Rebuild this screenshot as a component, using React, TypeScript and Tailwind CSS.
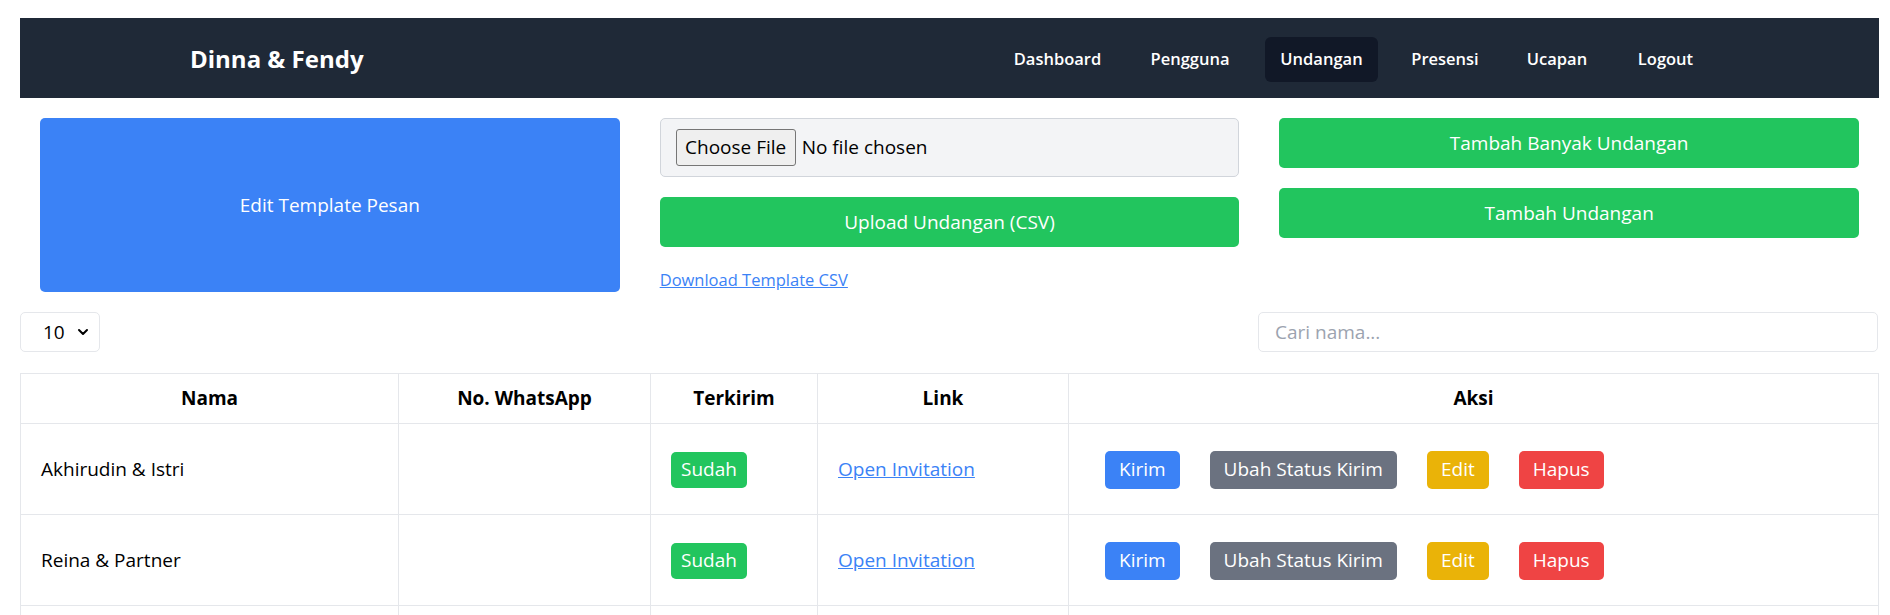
import { ChevronDown } from 'lucide-react'

const navItems = [
  { label: 'Dashboard', w: 'w-[115px]' },
  { label: 'Pengguna', w: 'w-[110px]' },
  { label: 'Undangan', w: 'w-[113px]', active: true },
  { label: 'Presensi', w: 'w-[94px]' },
  { label: 'Ucapan', w: 'w-[90px]' },
  { label: 'Logout', w: 'w-[87px]' },
]

const rows = [
  { nama: 'Akhirudin & Istri', wa: '', terkirim: true },
  { nama: 'Reina & Partner', wa: '', terkirim: true },
  { nama: 'Keluarga Besar', wa: '', terkirim: true },
]

function App() {
  return (
    <div className="min-h-screen bg-white pt-[18px] pl-[20px] pr-[11px] text-black font-['Open_Sans','Noto_Sans',sans-serif]">
      {/* navbar */}
      <nav className="h-[80px] bg-[#1f2937] flex items-center justify-between px-[170px] pt-[2px]">
        <span className="text-white text-[24px] font-bold">Dinna &amp; Fendy</span>
        <div className="flex items-center gap-[20px]">
          {navItems.map((item) => (
            <a
              key={item.label}
              className={`${item.w} h-[45px] flex items-center justify-center rounded-[6px] text-white text-[16.5px] font-semibold ${item.active ? 'bg-[#111827]' : ''}`}
            >
              {item.label}
            </a>
          ))}
        </div>
      </nav>

      {/* actions */}
      <div className="grid grid-cols-3 gap-x-[40px] px-[20px] pt-[20px]">
        <button className="bg-[#3b82f6] text-white text-[19px] rounded-[5px] flex items-center justify-center">
          Edit Template Pesan
        </button>
        <div className="flex flex-col gap-[20px]">
          <div className="h-[59px] flex items-center pl-[15px] bg-[#f3f4f6] border border-[#d1d5db] rounded-[5px]">
            <span className="h-[37px] w-[120px] flex items-center justify-center border border-[#767676] bg-[#efefef] rounded-[3px] text-[19px]">
              Choose File
            </span>
            <span className="ml-[6px] text-[19px]">No file chosen</span>
          </div>
          <button className="h-[50px] bg-[#22c55e] text-white text-[19px] rounded-[5px]">
            Upload Undangan (CSV)
          </button>
          <a className="text-[16.5px] leading-[25px] text-[#3b82f6] underline w-fit">Download Template CSV</a>
        </div>
        <div className="flex flex-col gap-[20px]">
          <button className="h-[50px] bg-[#22c55e] text-white text-[19px] rounded-[5px]">
            Tambah Banyak Undangan
          </button>
          <button className="h-[50px] bg-[#22c55e] text-white text-[19px] rounded-[5px]">
            Tambah Undangan
          </button>
        </div>
      </div>

      {/* filters */}
      <div className="flex items-center justify-between mt-[20px] pr-px">
        <div className="w-[80px] h-[40px] flex items-center justify-between pl-[22px] pr-[8px] border border-[#e5e7eb] rounded-[5px] text-[19px]">
          <span>10</span>
          <ChevronDown size={16} strokeWidth={3} />
        </div>
        <input
          className="w-[620px] h-[40px] px-[16px] border border-[#e5e7eb] rounded-[5px] text-[19px] placeholder:text-[#9ca3af] outline-none"
          placeholder="Cari nama..."
        />
      </div>

      {/* table */}
      <table className="w-full mt-[21px] border-collapse border border-[#e5e7eb] text-[19px]">
        <colgroup>
          <col className="w-[378px]" />
          <col className="w-[252px]" />
          <col className="w-[167px]" />
          <col className="w-[251px]" />
          <col />
        </colgroup>
        <thead>
          <tr className="h-[50px]">
            {['Nama', 'No. WhatsApp', 'Terkirim', 'Link', 'Aksi'].map((h) => (
              <th key={h} className="border border-[#e5e7eb] font-bold text-center">{h}</th>
            ))}
          </tr>
        </thead>
        <tbody>
          {rows.map((r) => (
            <tr key={r.nama} className="h-[91px]">
              <td className="border border-[#e5e7eb] px-[20px] pt-px">{r.nama}</td>
              <td className="border border-[#e5e7eb] px-[20px]">{r.wa}</td>
              <td className="border border-[#e5e7eb] px-[20px] pt-px">
                <span className={`inline-flex items-center h-[36px] px-[10px] rounded-[5px] text-white ${r.terkirim ? 'bg-[#22c55e]' : 'bg-[#ef4444]'}`}>
                  {r.terkirim ? 'Sudah' : 'Belum'}
                </span>
              </td>
              <td className="border border-[#e5e7eb] px-[20px] pt-px">
                <a className="text-[#3b82f6] underline">Open Invitation</a>
              </td>
              <td className="border border-[#e5e7eb] px-[21px] pt-px">
                <div className="flex items-center">
                  <button className="h-[38px] px-[14px] mx-[15px] rounded-[5px] bg-[#3b82f6] text-white">Kirim</button>
                  <button className="h-[38px] px-[14px] mx-[15px] rounded-[5px] bg-[#6b7280] text-white">Ubah Status Kirim</button>
                  <button className="h-[38px] px-[14px] mx-[15px] rounded-[5px] bg-[#eab308] text-white">Edit</button>
                  <button className="h-[38px] px-[14px] mx-[15px] rounded-[5px] bg-[#ef4444] text-white">Hapus</button>
                </div>
              </td>
            </tr>
          ))}
        </tbody>
      </table>
    </div>
  )
}

export default App
